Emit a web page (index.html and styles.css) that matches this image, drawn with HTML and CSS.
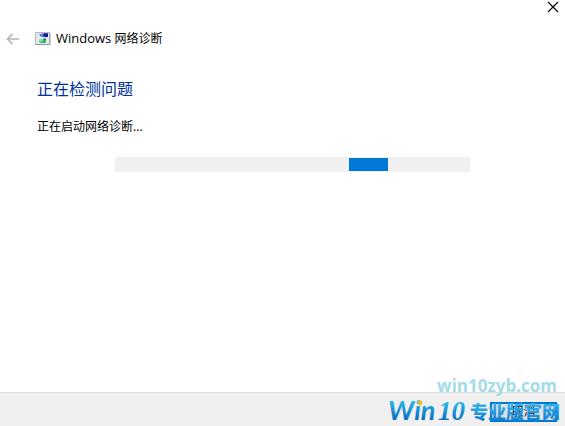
FILE: index.html
```html
<!DOCTYPE html>
<html lang="zh-CN">
<head>
<meta charset="utf-8">
<title>Windows 网络诊断</title>
<link rel="stylesheet" href="styles.css">
</head>
<body>
<div class="wizard">
  <div class="titlebar">
    <button class="icon-button" type="button" aria-label="关闭">
      <svg width="12" height="12" viewBox="0 0 12 12"><path d="M1 1l10 10M11 1L1 11" stroke="#000" stroke-width="1.2" fill="none"/></svg>
    </button>
  </div>
  <header class="header">
    <button class="icon-button" type="button" aria-label="返回" disabled>
      <svg width="14" height="12" viewBox="0 0 14 12"><path d="M6.500 1L1.500 6l5 5M1.500 6H13" stroke="#b4b4b4" stroke-width="1.700" fill="none"/></svg>
    </button>
    <svg class="app-icon" width="16" height="16" viewBox="0 0 16 16" aria-hidden="true">
      <rect x="0.5" y="1.5" width="14" height="12" fill="#e6eaee" stroke="#b4b9be"/>
      <path d="M1 13.5h14V2" stroke="#959ba2" fill="none"/>
      <path d="M5 3.500l2-1h6V6H9L5 5z" fill="#2430b0"/>
      <path d="M9 2.500h4V6h-3z" fill="#101a80"/>
      <path d="M3.500 3h4l1.500 1-2 1.500z" fill="#5d86e4"/>
      <path d="M5 9l4-1h2v3l-1 1H6.500L4 11z" fill="#25b860"/>
      <path d="M8.500 7.500H11l-.5 1.500H9z" fill="#14708a"/>
      <path d="M3 8.500h4L8.500 10 6 11z" fill="#7be59b"/>
    </svg>
    <span class="title"><span class="title-latin">Windows</span> 网络诊断</span>
  </header>
  <main class="content">
    <h1 class="heading">正在检测问题</h1>
    <p class="status">正在启动网络诊断...</p>
    <div class="progress" role="progressbar" aria-label="正在启动网络诊断">
      <div class="progress-chunk"></div>
    </div>
  </main>
  <footer class="footer">
    <button class="cancel" type="button">取消</button>
  </footer>
  <div class="watermark">
    <div class="site">win10zyb.com</div>
    <svg class="brand" width="176" height="30" viewBox="0 0 176 30">
      <defs>
        <linearGradient id="blue" x1="0" y1="0" x2="0" y2="1">
          <stop offset="0.2" stop-color="#28bdec"/>
          <stop offset="0.85" stop-color="#0868bc"/>
        </linearGradient>
        <linearGradient id="sky" x1="0" y1="0" x2="0" y2="1">
          <stop offset="0.2" stop-color="#38b4ee"/>
          <stop offset="0.85" stop-color="#1480d0"/>
        </linearGradient>
      </defs>
      <text class="brand-latin" x="2" y="24" fill="url(#blue)">Win</text>
      <text class="brand-digits" x="52" y="24" fill="url(#blue)">10</text>
      <text class="brand-cjk" x="84" y="23" fill="url(#sky)">专业版官网</text>
      <rect x="32" y="5" width="4" height="4" fill="#fdb913"/>
    </svg>
  </div>
</div>
</body>
</html>
```
FILE: styles.css
```css
* {
  box-sizing: border-box;
}

body {
  margin: 0;
  background: #fff;
  color: #000;
  font: 12px/16px "Noto Sans", "Noto Sans CJK SC", sans-serif;
}

.wizard {
  position: relative;
  display: flex;
  flex-direction: column;
  min-height: 100vh;
}

.titlebar {
  display: flex;
  justify-content: flex-end;
  padding: 1px 6px;
}

.icon-button {
  display: flex;
  padding: 0;
  border: 0;
  background: none;
}

.header {
  display: flex;
  align-items: center;
  padding: 16px 6px 0;
}

.app-icon {
  margin-left: 15px;
}

.title {
  margin-left: 5px;
}

.title-latin {
  font-family: "Open Sans", sans-serif;
  font-size: 13px;
}

.content {
  flex: 1;
  padding: 30px 95px 0 37px;
}

.heading {
  margin: 0;
  color: #003399;
  font-size: 16px;
  font-weight: 400;
  line-height: 24px;
}

.status {
  margin: 18px 0 0;
}

.progress {
  height: 15px;
  margin: 22px 0 0 78px;
  padding: 1px;
  background: #f0f0f0;
}

.progress-chunk {
  width: 11%;
  height: 13px;
  margin-left: 66%;
  background: #0078d7;
}

.footer {
  display: flex;
  justify-content: flex-end;
  padding: 9px 8px 4px;
  border-top: 1px solid #dfdfdf;
  background: #f0f0f0;
}

.cancel {
  width: 67px;
  height: 20px;
  padding: 0;
  border: 2px solid #0078d7;
  background: #e1e1e1;
  font: inherit;
}

.watermark {
  position: absolute;
  right: 3px;
  bottom: 0;
  pointer-events: none;
}

.site {
  padding-right: 5px;
  color: #a5dcea;
  font: 700 17px/20px "Open Sans", sans-serif;
  text-align: right;
}

.brand {
  display: block;
  overflow: visible;
}

.brand-latin {
  font: italic bold 27px "Lato", sans-serif;
}

.brand-digits {
  font: italic bold 27px "Liberation Serif", serif;
}

.brand-cjk {
  font: 900 18px "Noto Sans CJK SC", sans-serif;
}
```
